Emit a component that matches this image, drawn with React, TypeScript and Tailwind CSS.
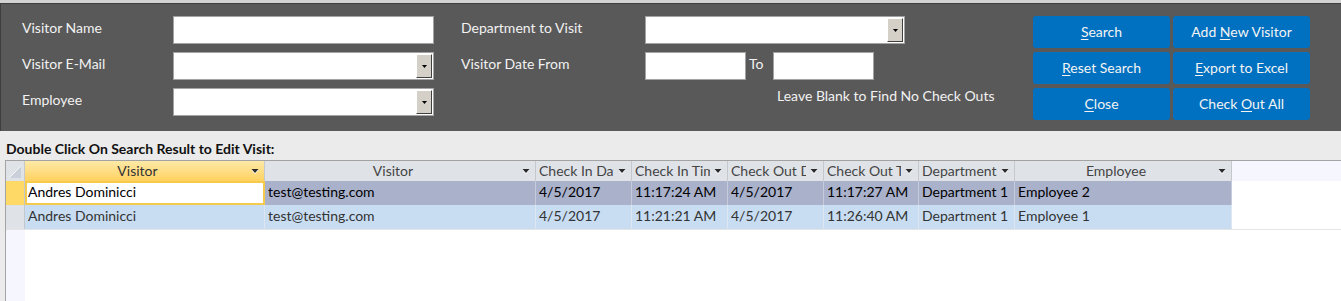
import React from "react";

const FONT = { fontFamily: "Lato, 'Open Sans', sans-serif" };

function Arrow() {
  return (
    <svg width="8" height="6" viewBox="0 0 8 6" className="shrink-0">
      <polygon points="0.5,1 7.5,1 4,5" fill="#ffffff" transform="translate(0,1)" />
      <polygon points="0.5,1 7.5,1 4,5" fill="#2b2b2b" />
    </svg>
  );
}

function Combo({ w }: { w: string }) {
  return (
    <div className={`${w} h-[28px] bg-white border border-[#a3a3a3] flex justify-end items-stretch p-[1px]`}>
      <div className="w-[16px] bg-[#d4d0c8] border-t border-l border-t-white border-l-white border-r border-b border-r-[#404040] border-b-[#404040] flex items-center justify-center">
        <svg width="5" height="3" viewBox="0 0 5 3">
          <polygon points="0,0 5,0 2.5,3" fill="#000" />
        </svg>
      </div>
    </div>
  );
}

function Input({ w }: { w: string }) {
  return <div className={`${w} h-[28px] bg-white border border-[#a3a3a3]`} />;
}

function Btn({ pre, u, post }: { pre: string; u: string; post: string }) {
  return (
    <div className="h-[32px] bg-[#0070c0] rounded-[3px] flex items-center justify-center text-[#f4f4f4] text-[14px] pb-[2px]">
      <span>
        {pre}
        <u className="underline-offset-2">{u}</u>
        {post}
      </span>
    </div>
  );
}

const cols = [
  { label: "Visitor", w: "w-[240px]", center: true, sel: true },
  { label: "Visitor", w: "w-[271px]", center: true },
  { label: "Check In Date", w: "w-[96px]" },
  { label: "Check In Time", w: "w-[96px]" },
  { label: "Check Out Date", w: "w-[96px]" },
  { label: "Check Out Time", w: "w-[95px]" },
  { label: "Department", w: "w-[96px]" },
  { label: "Employee", w: "w-[217px]", center: true },
];

const rows = [
  ["Andres Dominicci", "test@testing.com", "4/5/2017", "11:17:24 AM", "4/5/2017", "11:17:27 AM", "Department 1", "Employee 2"],
  ["Andres Dominicci", "test@testing.com", "4/5/2017", "11:21:21 AM", "4/5/2017", "11:26:40 AM", "Department 1", "Employee 1"],
];

export default function App() {
  return (
    <div className="w-[1341px] h-[301px] overflow-hidden bg-[#ebebeb] flex flex-col" style={FONT}>
      <div className="h-[3px] bg-[#d3d3d3] shrink-0" />
      <div className="h-[128px] shrink-0 bg-[#595959] border-t border-l border-[#3e3e3e] flex text-[14px] text-[#f2f2f2]">
        <div className="pl-[21px] pt-[12px] grid grid-cols-[151px_261px_27px_184px_101px_27px_101px] grid-rows-[28px_28px_28px] gap-y-[8px]">
          <div className="pt-[1px]">Visitor Name</div>
          <Input w="w-[261px]" />
          <div />
          <div className="pt-[1px]">Department to Visit</div>
          <div className="col-span-3">
            <Combo w="w-[260px]" />
          </div>

          <div className="pt-[1px]">Visitor E-Mail</div>
          <Combo w="w-[261px]" />
          <div />
          <div className="pt-[1px]">Visitor Date From</div>
          <Input w="w-[101px]" />
          <div className="pt-[1px] pl-[3px]">To</div>
          <Input w="w-[101px]" />

          <div className="pt-[1px]">Employee</div>
          <Combo w="w-[261px]" />
          <div />
          <div className="col-span-4 pl-[316px] -mt-[3px] whitespace-nowrap">Leave Blank to Find No Check Outs</div>
        </div>
        <div className="ml-auto mr-[31px] pt-[12px] grid grid-cols-[137px_137px] gap-x-[3px] gap-y-[4px] auto-rows-[32px]">
          <Btn pre="" u="S" post="earch" />
          <Btn pre="Add " u="N" post="ew Visitor" />
          <Btn pre="" u="R" post="eset Search" />
          <Btn pre="" u="E" post="xport to Excel" />
          <Btn pre="" u="C" post="lose" />
          <Btn pre="Check " u="O" post="ut All" />
        </div>
      </div>
      <div className="h-[29px] shrink-0 flex items-end pl-[6px] pb-[1px] text-[14px] font-bold text-[#111]">
        Double Click On Search Result to Edit Visit:
      </div>
      <div className="flex-1 flex">
        <div className="w-[5px] shrink-0" />
        <div className="flex-1 border-t border-l border-[#a3a3a3] bg-white flex flex-col text-[14px]">
          <div className="h-[20px] flex bg-[#f5f6fe]">
            <div className="w-[19px] bg-[#dfe3e8] border-r border-[#c5c8cc] relative">
              <svg width="14" height="14" viewBox="0 0 14 14" className="absolute right-[2px] bottom-[2px]">
                <polygon points="13,1 13,13 1,13" fill="#c9d0da" />
                <line x1="13" y1="1" x2="1" y2="13" stroke="#f4f6f8" strokeWidth="1" />
              </svg>
            </div>
            {cols.map((c, i) => (
              <div
                key={i}
                className={`${c.w} shrink-0 border-r border-[#c5c8cc] flex items-center gap-[4px] pr-[5px] ${
                  c.sel ? "bg-gradient-to-b from-[#fde9a6] to-[#ffd15e] text-[#333]" : "bg-[#dfe3e8] text-[#444]"
                }`}
              >
                <div className={`flex-1 overflow-hidden whitespace-nowrap pl-[3px] pb-[2px] ${c.center ? "text-center" : ""}`}>{c.label}</div>
                <Arrow />
              </div>
            ))}
          </div>
          {rows.map((r, ri) => (
            <div key={ri} className="h-[24px] flex">
              <div className={`w-[19px] shrink-0 border-r border-[#c5c8cc] ${ri === 0 ? "bg-[#ffd966]" : "bg-[#dfe3e8]"}`} />
              {r.map((v, ci) => {
                const editing = ri === 0 && ci === 0;
                return (
                  <div
                    key={ci}
                    className={`${cols[ci].w} shrink-0 flex items-center overflow-hidden whitespace-nowrap pb-[3px] ${
                      editing
                        ? "bg-white border-2 border-[#f5cb4c] pl-[1px] pb-[1px] text-black"
                        : ri === 0
                        ? "bg-[#a9b1cb] border-r border-[#c6ccdc] pl-[3px] text-black"
                        : "bg-[#c8ddf2] border-r border-[#dde6f0] pl-[3px] text-[#333]"
                    }`}
                  >
                    {v}
                  </div>
                );
              })}
            </div>
          ))}
          <div className="flex-1 flex border-t border-[#e4e4e4]">
            <div className="w-[19px] bg-[#f5f6fe]" />
          </div>
        </div>
      </div>
    </div>
  );
}
